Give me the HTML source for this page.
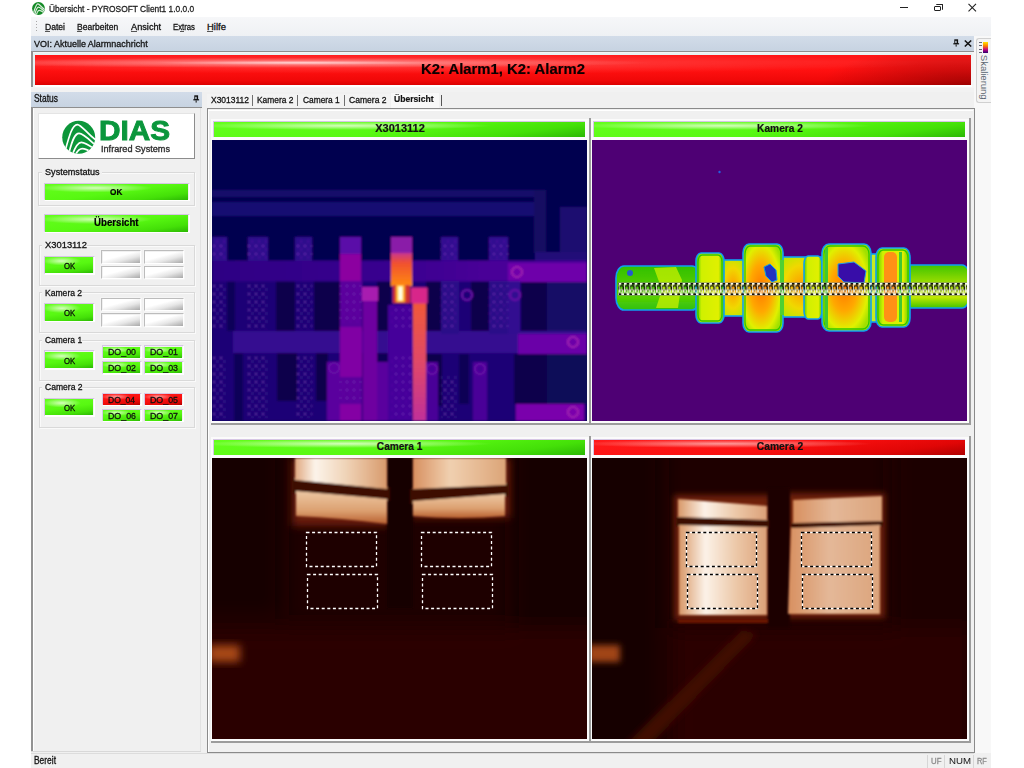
<!DOCTYPE html>
<html><head><meta charset="utf-8">
<style>
*{margin:0;padding:0;box-sizing:border-box}
html,body{width:1024px;height:768px;overflow:hidden;background:#fff;font-family:"Liberation Sans",sans-serif;font-size:11px;color:#000}
.a{position:absolute}
.t{position:absolute;white-space:nowrap;line-height:1}
.hdr{background:linear-gradient(#d2dce9,#c7d3e1)}
.greenbtn{background:
 radial-gradient(ellipse 40% 28% at 35% 25%,rgba(225,255,205,.9),rgba(225,255,205,0) 100%),
 linear-gradient(172deg,#64ff1c 0%,#58f812 50%,#44e008 80%,#2cb804 100%);}
.redbtn{background:
 radial-gradient(ellipse 40% 28% at 35% 25%,rgba(255,175,175,.85),rgba(255,175,175,0) 100%),
 linear-gradient(172deg,#ff1a1a 0%,#fa1010 50%,#e00606 80%,#b00000 100%);}
.gbtn{background:linear-gradient(165deg,#fff 0%,#fff 40%,#e6e6e6 65%,#a8a8a8 100%)}
.grp{border:1px solid #d9d9d9;box-shadow:inset 1px 1px 0 #fafafa, 1px 1px 0 #fafafa}
</style></head><body>

<svg class="a" style="left:32px;top:2px" width="13" height="13" viewBox="0 0 768 768">
<defs><clipPath id="ic"><circle cx="384" cy="384" r="380"/></clipPath></defs>
<circle cx="384" cy="384" r="380" fill="#138a26"/>
<g clip-path="url(#ic)" stroke="#d8ecd8" stroke-width="70" fill="none">
<path d="M90 660 C180 330 250 110 350 110 C440 110 520 290 760 450"/>
<path d="M170 720 C240 440 300 300 385 300 C470 300 560 410 740 560"/>
<path d="M250 770 C310 580 360 490 430 490 C510 490 590 550 700 630"/>
</g></svg>
<div class="a" style="left:900px;top:7px;width:8px;height:1.2px;background:#222"></div>
<div class="a" style="left:934px;top:5.5px;width:6.5px;height:5.5px;border:1.1px solid #222;border-radius:1px;background:#fff"></div>
<div class="a" style="left:936px;top:4px;width:6.5px;height:5.5px;border-top:1.1px solid #222;border-right:1.1px solid #222;border-radius:1px"></div>
<svg class="a" style="left:968px;top:3px" width="9" height="9"><path d="M0.5 0.8L8 8.3M8 0.8L0.5 8.3" stroke="#222" stroke-width="1.1"/></svg>
<div class="a" style="left:31px;top:17px;width:960px;height:751px;background:#f0f0f0"></div>
<div class="a" style="left:31px;top:16.5px;width:960px;height:19px;background:linear-gradient(#f6f7f9,#eff1f4)"></div>
<div class="a" style="left:35.5px;top:21px;width:1.5px;height:11px;background:repeating-linear-gradient(#a8a8a8 0 1.3px,transparent 1.3px 3px)"></div>
<div class="a" style="left:44.7px;top:30.6px;width:5.799999999999997px;height:1px;background:#555"></div>
<div class="a" style="left:76.9px;top:30.6px;width:5.599999999999994px;height:1px;background:#555"></div>
<div class="a" style="left:130.5px;top:30.6px;width:6.5px;height:1px;background:#555"></div>
<div class="a" style="left:180px;top:30.6px;width:4px;height:1px;background:#555"></div>
<div class="a" style="left:207px;top:30.6px;width:6px;height:1px;background:#555"></div>
<div class="a hdr" style="left:31px;top:35.5px;width:943px;height:15.5px"></div>
<svg class="a" style="left:953px;top:39px" width="7" height="8"><rect x="1.3" y="0.3" width="3.8" height="4.6" fill="#111"/><rect x="2.3" y="1.8" width="1.3" height="2.2" fill="#d4dfeb"/><rect x="0.3" y="4.2" width="5.8" height="1.2" fill="#111"/><rect x="2.6" y="5.4" width="1.1" height="2.2" fill="#222"/></svg>
<svg class="a" style="left:964px;top:40px" width="8" height="7"><path d="M0.8 0.5L7.2 6.5M7.2 0.5L0.8 6.5" stroke="#111" stroke-width="1.5"/></svg>
<div class="a" style="left:31px;top:50.8px;width:943px;height:37px;background:#f5f5f5"></div>
<div class="a" style="left:31px;top:50.8px;width:943px;height:1.7px;background:#8e8e8e"></div>
<div class="a" style="left:31px;top:50.8px;width:1.8px;height:36.5px;background:#939393"></div>
<div class="a" style="left:32.8px;top:52.5px;width:939px;height:2px;background:#e6f2f2"></div>
<div class="a" style="left:32.8px;top:52.5px;width:1.8px;height:32.5px;background:#e6f2f2"></div>
<div class="a" style="left:34.6px;top:54.6px;width:936.4px;height:30px;background:
 radial-gradient(ellipse 38% 17% at 28% 26%,rgba(255,215,215,1),rgba(255,170,170,.5) 40%,rgba(255,150,150,0)),
 radial-gradient(ellipse 55% 35% at 40% 28%,rgba(255,120,120,.45),rgba(255,120,120,0)),
 linear-gradient(#ff1414 0%,#ff1a1a 22%,#ff1010 50%,#f00808 85%,#dc0000 100%)"></div>
<div class="a" style="left:34.6px;top:54.6px;width:936.4px;height:30px;background:radial-gradient(ellipse 16% 130% at 100% 100%,rgba(80,0,0,.45),rgba(80,0,0,0))"></div>
<div class="a" style="left:34.6px;top:84.6px;width:937px;height:2.7px;background:#fff"></div>
<div class="a" style="left:974px;top:35.5px;width:17px;height:717px;background:#f8f8f8"></div>
<div class="a" style="left:976.3px;top:37.7px;width:14.7px;height:65.7px;background:#f4f4f4;border:1px solid #d0d0d0;border-right:none;border-radius:3px 0 0 3px"></div>
<div class="a" style="left:983.3px;top:42px;width:4.5px;height:11px;background:linear-gradient(#ffe400,#ff8000 35%,#c00080 70%,#28006e)"></div>
<div class="a" style="left:979.3px;top:42px;width:3px;height:11px;background:repeating-linear-gradient(#667 0 1px,transparent 1px 3.3px)"></div>
<div class="t" style="left:962px;top:71.8px;width:44px;text-align:center;font-size:9.7px;letter-spacing:-0.1px;color:#5a6470;transform:rotate(90deg)">Skalierung</div>
<div class="a" style="left:31px;top:88px;width:943px;height:4px;background:#f2f2f2"></div>
<div class="a hdr" style="left:31px;top:91.7px;width:170.5px;height:15.5px"></div>
<svg class="a" style="left:192.6px;top:94.8px" width="7" height="8"><rect x="1.3" y="0.3" width="3.8" height="4.6" fill="#111"/><rect x="2.3" y="1.8" width="1.3" height="2.2" fill="#d4dfeb"/><rect x="0.3" y="4.2" width="5.8" height="1.2" fill="#111"/><rect x="2.6" y="5.4" width="1.1" height="2.2" fill="#222"/></svg>
<div class="a" style="left:31px;top:107.1px;width:170.5px;height:1.2px;background:#8e8e8e"></div>
<div class="a" style="left:31px;top:108px;width:170px;height:644px;background:#f0f0f0"></div>
<div class="a" style="left:31px;top:107px;width:1.5px;height:645px;background:#939393"></div>
<div class="a" style="left:32.5px;top:108.3px;width:1px;height:643px;background:#fff"></div>
<div class="a" style="left:199.8px;top:108px;width:1.2px;height:644px;background:#e2e2e2"></div>
<div class="a" style="left:31px;top:751.2px;width:170px;height:1.2px;background:#d8d8d8"></div>
<div class="a" style="left:37.8px;top:113.4px;width:157.4px;height:46px;background:#fff;border-top:1px solid #e4e4e4;border-left:1px solid #e4e4e4;border-right:1.6px solid #8c8c8c;border-bottom:1.6px solid #8c8c8c"></div>
<svg class="a" style="left:60px;top:118.5px" width="38" height="38" viewBox="0 0 768 768">
<defs><clipPath id="lc"><circle cx="378" cy="370" r="333"/></clipPath></defs>
<circle cx="378" cy="370" r="333" fill="#0c963a"/>
<g clip-path="url(#lc)" stroke="#fff" stroke-width="34" fill="none">
<path d="M110 620 C190 330 250 112 350 112 C440 112 530 290 760 450"/>
<path d="M185 670 C250 420 300 292 385 292 C470 292 570 400 740 550"/>
<path d="M250 720 C310 560 360 472 430 472 C510 472 590 530 700 610"/>
<path d="M290 760 C340 660 390 600 450 600 C510 600 570 630 650 680"/>
</g></svg>
<div class="a grp" style="left:38.4px;top:171.7px;width:156.5px;height:34.3px"></div>
<div class="a" style="left:42px;top:166px;width:60px;height:9px;background:#f0f0f0"></div>
<div class="a" style="left:43.6px;top:182.55px;width:146.2px;height:18.8px;border-top:1px solid #d6c6e4;border-left:1px solid #d6c6e4;border-right:1.5px solid #fff;border-bottom:2px solid #fff"></div><div class="a greenbtn" style="left:44.9px;top:183.75px;width:143.6px;height:16px"></div>
<div class="a" style="left:43.6px;top:213.8px;width:146.2px;height:19.400000000000002px;border-top:1px solid #d6c6e4;border-left:1px solid #d6c6e4;border-right:1.5px solid #fff;border-bottom:2px solid #fff"></div><div class="a greenbtn" style="left:44.9px;top:215px;width:143.6px;height:16.6px"></div>
<div class="a grp" style="left:38.5px;top:244.8px;width:156.5px;height:41px"></div>
<div class="a" style="left:42px;top:239.8px;width:45px;height:9px;background:#f0f0f0"></div>
<div class="a" style="left:43.5px;top:255.70000000000005px;width:51.1px;height:19.3px;border-top:1px solid #d6c6e4;border-left:1px solid #d6c6e4;border-right:1.5px solid #fff;border-bottom:2px solid #fff"></div><div class="a greenbtn" style="left:44.8px;top:256.90000000000003px;width:48.5px;height:16.5px"></div>
<div class="a" style="left:101.4px;top:250.20000000000002px;width:40px;height:13.4px;border-top:1.3px solid #bcbcbc;border-left:1.3px solid #bcbcbc;border-right:1px solid #fff;border-bottom:1px solid #fff;box-shadow:0 0 0 0.6px #f8f8f8"></div>
<div class="a gbtn" style="left:102.7px;top:251.50000000000003px;width:37.7px;height:11.1px"></div>
<div class="a" style="left:143.60000000000002px;top:250.20000000000002px;width:40px;height:13.4px;border-top:1.3px solid #bcbcbc;border-left:1.3px solid #bcbcbc;border-right:1px solid #fff;border-bottom:1px solid #fff;box-shadow:0 0 0 0.6px #f8f8f8"></div>
<div class="a gbtn" style="left:144.90000000000003px;top:251.50000000000003px;width:37.7px;height:11.1px"></div>
<div class="a" style="left:101.4px;top:266.1px;width:40px;height:13.4px;border-top:1.3px solid #bcbcbc;border-left:1.3px solid #bcbcbc;border-right:1px solid #fff;border-bottom:1px solid #fff;box-shadow:0 0 0 0.6px #f8f8f8"></div>
<div class="a gbtn" style="left:102.7px;top:267.40000000000003px;width:37.7px;height:11.1px"></div>
<div class="a" style="left:143.60000000000002px;top:266.1px;width:40px;height:13.4px;border-top:1.3px solid #bcbcbc;border-left:1.3px solid #bcbcbc;border-right:1px solid #fff;border-bottom:1px solid #fff;box-shadow:0 0 0 0.6px #f8f8f8"></div>
<div class="a gbtn" style="left:144.90000000000003px;top:267.40000000000003px;width:37.7px;height:11.1px"></div>
<div class="a grp" style="left:38.5px;top:292.1px;width:156.5px;height:41px"></div>
<div class="a" style="left:42px;top:287.1px;width:40px;height:9px;background:#f0f0f0"></div>
<div class="a" style="left:43.5px;top:303.00000000000006px;width:51.1px;height:19.3px;border-top:1px solid #d6c6e4;border-left:1px solid #d6c6e4;border-right:1.5px solid #fff;border-bottom:2px solid #fff"></div><div class="a greenbtn" style="left:44.8px;top:304.20000000000005px;width:48.5px;height:16.5px"></div>
<div class="a" style="left:101.4px;top:297.5px;width:40px;height:13.4px;border-top:1.3px solid #bcbcbc;border-left:1.3px solid #bcbcbc;border-right:1px solid #fff;border-bottom:1px solid #fff;box-shadow:0 0 0 0.6px #f8f8f8"></div>
<div class="a gbtn" style="left:102.7px;top:298.8px;width:37.7px;height:11.1px"></div>
<div class="a" style="left:143.60000000000002px;top:297.5px;width:40px;height:13.4px;border-top:1.3px solid #bcbcbc;border-left:1.3px solid #bcbcbc;border-right:1px solid #fff;border-bottom:1px solid #fff;box-shadow:0 0 0 0.6px #f8f8f8"></div>
<div class="a gbtn" style="left:144.90000000000003px;top:298.8px;width:37.7px;height:11.1px"></div>
<div class="a" style="left:101.4px;top:313.4px;width:40px;height:13.4px;border-top:1.3px solid #bcbcbc;border-left:1.3px solid #bcbcbc;border-right:1px solid #fff;border-bottom:1px solid #fff;box-shadow:0 0 0 0.6px #f8f8f8"></div>
<div class="a gbtn" style="left:102.7px;top:314.7px;width:37.7px;height:11.1px"></div>
<div class="a" style="left:143.60000000000002px;top:313.4px;width:40px;height:13.4px;border-top:1.3px solid #bcbcbc;border-left:1.3px solid #bcbcbc;border-right:1px solid #fff;border-bottom:1px solid #fff;box-shadow:0 0 0 0.6px #f8f8f8"></div>
<div class="a gbtn" style="left:144.90000000000003px;top:314.7px;width:37.7px;height:11.1px"></div>
<div class="a grp" style="left:38.5px;top:339.5px;width:156.5px;height:41px"></div>
<div class="a" style="left:42px;top:334.5px;width:40px;height:9px;background:#f0f0f0"></div>
<div class="a" style="left:43.5px;top:350.40000000000003px;width:51.1px;height:19.3px;border-top:1px solid #d6c6e4;border-left:1px solid #d6c6e4;border-right:1.5px solid #fff;border-bottom:2px solid #fff"></div><div class="a greenbtn" style="left:44.8px;top:351.6px;width:48.5px;height:16.5px"></div>
<div class="a" style="left:101.50000000000001px;top:345.40000000000003px;width:40.0px;height:13.8px;border-top:1px solid #d6c6e4;border-left:1px solid #d6c6e4;border-right:1.5px solid #fff;border-bottom:2px solid #fff"></div><div class="a greenbtn" style="left:102.80000000000001px;top:346.6px;width:37.4px;height:11px"></div>
<div class="a" style="left:143.70000000000002px;top:345.40000000000003px;width:40.0px;height:13.8px;border-top:1px solid #d6c6e4;border-left:1px solid #d6c6e4;border-right:1.5px solid #fff;border-bottom:2px solid #fff"></div><div class="a greenbtn" style="left:145.00000000000003px;top:346.6px;width:37.4px;height:11px"></div>
<div class="a" style="left:101.50000000000001px;top:361.20000000000005px;width:40.0px;height:13.8px;border-top:1px solid #d6c6e4;border-left:1px solid #d6c6e4;border-right:1.5px solid #fff;border-bottom:2px solid #fff"></div><div class="a greenbtn" style="left:102.80000000000001px;top:362.40000000000003px;width:37.4px;height:11px"></div>
<div class="a" style="left:143.70000000000002px;top:361.20000000000005px;width:40.0px;height:13.8px;border-top:1px solid #d6c6e4;border-left:1px solid #d6c6e4;border-right:1.5px solid #fff;border-bottom:2px solid #fff"></div><div class="a greenbtn" style="left:145.00000000000003px;top:362.40000000000003px;width:37.4px;height:11px"></div>
<div class="a grp" style="left:38.5px;top:386.8px;width:156.5px;height:41px"></div>
<div class="a" style="left:42px;top:381.8px;width:40px;height:9px;background:#f0f0f0"></div>
<div class="a" style="left:43.5px;top:397.70000000000005px;width:51.1px;height:19.3px;border-top:1px solid #d6c6e4;border-left:1px solid #d6c6e4;border-right:1.5px solid #fff;border-bottom:2px solid #fff"></div><div class="a greenbtn" style="left:44.8px;top:398.90000000000003px;width:48.5px;height:16.5px"></div>
<div class="a" style="left:101.50000000000001px;top:392.70000000000005px;width:40.0px;height:13.8px;border-top:1px solid #d6c6e4;border-left:1px solid #d6c6e4;border-right:1.5px solid #fff;border-bottom:2px solid #fff"></div><div class="a redbtn" style="left:102.80000000000001px;top:393.90000000000003px;width:37.4px;height:11px"></div>
<div class="a" style="left:143.70000000000002px;top:392.70000000000005px;width:40.0px;height:13.8px;border-top:1px solid #d6c6e4;border-left:1px solid #d6c6e4;border-right:1.5px solid #fff;border-bottom:2px solid #fff"></div><div class="a redbtn" style="left:145.00000000000003px;top:393.90000000000003px;width:37.4px;height:11px"></div>
<div class="a" style="left:101.50000000000001px;top:408.50000000000006px;width:40.0px;height:13.8px;border-top:1px solid #d6c6e4;border-left:1px solid #d6c6e4;border-right:1.5px solid #fff;border-bottom:2px solid #fff"></div><div class="a greenbtn" style="left:102.80000000000001px;top:409.70000000000005px;width:37.4px;height:11px"></div>
<div class="a" style="left:143.70000000000002px;top:408.50000000000006px;width:40.0px;height:13.8px;border-top:1px solid #d6c6e4;border-left:1px solid #d6c6e4;border-right:1.5px solid #fff;border-bottom:2px solid #fff"></div><div class="a greenbtn" style="left:145.00000000000003px;top:409.70000000000005px;width:37.4px;height:11px"></div>
<div class="a" style="left:207px;top:93.7px;width:183px;height:14.5px;background:#f3f3f3"></div>
<div class="a" style="left:251.6px;top:94.6px;width:1.2px;height:11.7px;background:#707070"></div>
<div class="a" style="left:297.3px;top:94.6px;width:1.2px;height:11.7px;background:#707070"></div>
<div class="a" style="left:343.6px;top:94.6px;width:1.2px;height:11.7px;background:#707070"></div>
<div class="a" style="left:390.8px;top:93.1px;width:48px;height:15px;background:#f8f8f8"></div>
<div class="a" style="left:441px;top:94.6px;width:1.3px;height:11.7px;background:#555"></div>
<div class="a" style="left:207px;top:108.2px;width:767.5px;height:644.5px;background:#f0f0f0;border:1.3px solid #8a8a8a;border-right:1.5px solid #8a8a8a"></div>
<div class="a" style="left:208.3px;top:109.5px;width:765px;height:1px;background:#fff"></div>
<div class="a" style="left:208.3px;top:109.5px;width:1px;height:642px;background:#fff"></div>
<div class="a" style="left:211px;top:119px;width:379px;height:305px;background:#fbfbfb"></div>
<div class="a" style="left:589px;top:118px;width:2px;height:307px;background:#9c9c9c"></div>
<div class="a" style="left:211px;top:423px;width:380px;height:2px;background:#9c9c9c"></div>
<div class="a" style="left:213px;top:121px;width:372px;height:16px;border-top:1px solid #d6c6e4;border-left:1px solid #d6c6e4"></div>
<div class="a greenbtn" style="left:214px;top:122px;width:371px;height:14.5px"></div>
<div class="a" style="left:212px;top:140px;width:375px;height:281px;overflow:hidden"><svg width="375" height="281" viewBox="0 0 375 281">
<defs><filter id="b0" x="-2%" y="-2%" width="104%" height="104%"><feGaussianBlur stdDeviation="0.8"/></filter>
<linearGradient id="hot" x1="0" y1="0" x2="0" y2="1"><stop offset="0" stop-color="#f05a38"/><stop offset="0.5" stop-color="#e04868"/><stop offset="1" stop-color="#c0309a"/></linearGradient>
<linearGradient id="hot2" x1="0" y1="0" x2="0" y2="1"><stop offset="0" stop-color="#c83890"/><stop offset="0.3" stop-color="#f05030"/><stop offset="1" stop-color="#ff8a10"/></linearGradient>
<linearGradient id="bus" x1="0" y1="0" x2="1" y2="0"><stop offset="0" stop-color="#2e0484"/><stop offset="0.5" stop-color="#3a0490"/><stop offset="0.75" stop-color="#4a0098"/><stop offset="1" stop-color="#4a0098"/></linearGradient>
<pattern id="cdots" width="7" height="8" patternUnits="userSpaceOnUse"><rect x="1" y="1" width="2" height="2" fill="#8a40c8"/><rect x="4.5" y="4.5" width="1.6" height="2" fill="#6a28b0"/></pattern>
</defs>
<rect width="375" height="281" fill="#060650"/>
<g filter="url(#b0)">
<rect width="375" height="281" fill="#060650"/>
<rect x="0" y="50" width="334" height="7" fill="#160a6a"/>
<rect x="0" y="62" width="334" height="14" fill="#180a72"/>
<rect x="322" y="50" width="12" height="63" fill="#120862"/>
<rect x="348" y="67" width="27" height="46" fill="#1a0a70"/>
<!-- lower base -->
<rect x="0" y="141" width="375" height="140" fill="#1c0676"/>
<!-- navy gaps lower -->
<rect x="15" y="141" width="8" height="50" fill="#0c0658"/>
<rect x="22" y="213" width="9" height="68" fill="#0c0658"/>
<rect x="64" y="141" width="19" height="50" fill="#07064c"/>
<rect x="65" y="213" width="20" height="48" fill="#07064c"/>
<rect x="102" y="141" width="26" height="50" fill="#07064c"/>
<rect x="104" y="213" width="12" height="48" fill="#07064c"/>
<rect x="165" y="141" width="14" height="52" fill="#07064c"/>
<rect x="163" y="213" width="13" height="48" fill="#0a0654"/>
<rect x="214" y="141" width="15" height="53" fill="#07064c"/>
<rect x="214" y="214" width="16" height="52" fill="#07064c"/>
<rect x="259" y="141" width="18" height="53" fill="#07064c"/>
<rect x="247" y="214" width="10" height="50" fill="#0a0654"/>
<rect x="309" y="141" width="26" height="53" fill="#07064c"/>
<rect x="302" y="214" width="33" height="50" fill="#07064c"/>
<rect x="335" y="141" width="40" height="53" fill="#140a66"/>
<rect x="335" y="214" width="40" height="50" fill="#0e0858"/>
<!-- column tops -->
<rect x="0" y="97" width="15" height="24" fill="#2d0a8c"/>
<rect x="36" y="97" width="20" height="24" fill="#2d0a8c"/>
<rect x="83" y="97" width="17" height="24" fill="#2d0a8c"/>
<rect x="128" y="97" width="21" height="24" fill="#5a10a8"/>
<rect x="229" y="97" width="17" height="24" fill="#300a90"/>
<rect x="277" y="97" width="19" height="24" fill="#300a90"/>
<rect x="323" y="112" width="52" height="10" fill="#220a78"/>
<!-- upper busbar -->
<rect x="0" y="120.5" width="375" height="21" fill="url(#bus)"/>
<rect x="296" y="123" width="79" height="19" fill="#6e00aa"/>
<rect x="128" y="114" width="21" height="29" fill="#8c00a0"/>
<!-- lower busbar -->
<rect x="128" y="141" width="22" height="140" fill="#5a009c"/>
<rect x="21" y="191" width="354" height="22" fill="#340890"/>
<rect x="306" y="194" width="69" height="20" fill="#6a00a8"/>
<rect x="128" y="187" width="22" height="50" fill="#8000a4"/>
<rect x="128" y="264" width="21" height="17" fill="#8400a4"/>
<rect x="304" y="264" width="68" height="17" fill="#7a00ac"/>
<rect x="176" y="165" width="24" height="116" fill="#44009a"/>
<rect x="115" y="222" width="13" height="59" fill="#5a009e"/>
<rect x="163" y="222" width="13" height="59" fill="#5a009e"/>
<rect x="213" y="222" width="13" height="59" fill="#4a0098"/>
<rect x="261" y="222" width="14" height="59" fill="#4a0098"/>
<rect x="296" y="141" width="12" height="53" fill="#300a90"/>
<rect x="229" y="141" width="18" height="53" fill="#2a0888"/>
<rect x="277" y="141" width="19" height="53" fill="#2a0888"/>
<!-- grey purple strip -->
<rect x="151" y="148" width="14" height="133" fill="#6e00a0"/>
<rect x="150" y="147" width="16" height="14" fill="#a81eb0"/>
<!-- hot column -->
<rect x="179" y="97" width="21" height="17" fill="#8a1aa8"/>
<rect x="179" y="113" width="21" height="33" fill="url(#hot2)"/>
<rect x="181" y="145" width="17" height="18" fill="#d03030"/>
<rect x="184" y="145" width="9" height="17" fill="#ffa020"/>
<rect x="185.5" y="146" width="5.5" height="15" fill="#fff070"/>
<rect x="187" y="147" width="3" height="13" fill="#fffff0"/>
<rect x="201" y="163" width="13" height="118" fill="url(#hot)"/>
<rect x="199" y="147.5" width="16.5" height="16" fill="#d8288a"/>
<g opacity="0.55">
<rect x="0" y="99" width="15" height="20" fill="url(#cdots)"/>
<rect x="36" y="99" width="20" height="20" fill="url(#cdots)"/>
<rect x="83" y="99" width="17" height="20" fill="url(#cdots)"/>
<rect x="229" y="99" width="17" height="20" fill="url(#cdots)"/>
<rect x="277" y="99" width="19" height="20" fill="url(#cdots)"/>
<rect x="0" y="145" width="15" height="44" fill="url(#cdots)"/>
<rect x="36" y="145" width="20" height="44" fill="url(#cdots)"/>
<rect x="83" y="145" width="17" height="44" fill="url(#cdots)"/>
<rect x="229" y="145" width="17" height="44" fill="url(#cdots)"/>
<rect x="277" y="145" width="19" height="44" fill="url(#cdots)"/>
<rect x="179" y="165" width="20" height="24" fill="url(#cdots)"/>
<rect x="0" y="216" width="15" height="62" fill="url(#cdots)"/>
<rect x="36" y="216" width="20" height="62" fill="url(#cdots)"/>
<rect x="83" y="216" width="17" height="62" fill="url(#cdots)"/>
<rect x="179" y="216" width="20" height="62" fill="url(#cdots)"/>
<rect x="229" y="236" width="17" height="42" fill="url(#cdots)"/>
<rect x="128" y="145" width="21" height="40" fill="url(#cdots)"/>
<rect x="128" y="240" width="21" height="22" fill="url(#cdots)"/>
</g>
<!-- bolts -->
<g fill="none" stroke="#6a10a8" stroke-width="2.2">
<circle cx="255" cy="155" r="5"/><circle cx="303" cy="155" r="5"/><circle cx="220" cy="229" r="5"/><circle cx="268" cy="229" r="5"/><circle cx="122" cy="228" r="5"/><circle cx="361" cy="202" r="5" stroke="#a020b0"/><circle cx="361" cy="272" r="5" stroke="#a020b0"/><circle cx="305" cy="132" r="5" stroke="#a020b0"/>
</g>
</g>
</svg></div>
<div class="a" style="left:591px;top:119px;width:379px;height:305px;background:#fbfbfb"></div>
<div class="a" style="left:969px;top:118px;width:2px;height:307px;background:#9c9c9c"></div>
<div class="a" style="left:591px;top:423px;width:380px;height:2px;background:#9c9c9c"></div>
<div class="a" style="left:593px;top:121px;width:372px;height:16px;border-top:1px solid #d6c6e4;border-left:1px solid #d6c6e4"></div>
<div class="a greenbtn" style="left:594px;top:122px;width:371px;height:14.5px"></div>
<div class="a" style="left:592px;top:140px;width:375px;height:281px;overflow:hidden"><svg width="375" height="281" viewBox="0 0 375 281">
<defs>
<filter id="b1" x="-5%" y="-5%" width="110%" height="110%"><feGaussianBlur stdDeviation="0.6"/></filter>
<pattern id="dots" x="0" y="142.5" width="5.33" height="13" patternUnits="userSpaceOnUse">
<rect x="0" y="0" width="2.66" height="2.4" fill="#f8f8f0"/><rect x="2.66" y="0" width="2.67" height="2.4" fill="#111"/>
<rect x="0" y="10.6" width="2.66" height="2.4" fill="#111"/><rect x="2.66" y="10.6" width="2.67" height="2.4" fill="#f8f8f0"/>
<circle cx="2.66" cy="5.4" r="2.2" fill="none" stroke="#101010" stroke-width="1.3"/><circle cx="2.66" cy="8.6" r="1.6" fill="none" stroke="#f0f0e0" stroke-width="0.9"/>
<rect x="0" y="2.4" width="0.8" height="8" fill="#f0f0e0"/>
</pattern>
<linearGradient id="gy" x1="0" y1="0" x2="1" y2="0"><stop offset="0" stop-color="#50c800"/><stop offset="0.2" stop-color="#d0f000"/><stop offset="0.8" stop-color="#e0f000"/><stop offset="1" stop-color="#48c800"/></linearGradient>
<linearGradient id="gg" x1="0" y1="0" x2="0" y2="1"><stop offset="0" stop-color="#30c000"/><stop offset="0.3" stop-color="#48c800"/><stop offset="0.7" stop-color="#58d000"/><stop offset="1" stop-color="#30c010"/></linearGradient>
<radialGradient id="go" cx="0.45" cy="0.5" r="0.6"><stop offset="0" stop-color="#ff7800"/><stop offset="0.45" stop-color="#ffa800"/><stop offset="0.8" stop-color="#e0f000"/><stop offset="1" stop-color="#a0e000"/></radialGradient>
<radialGradient id="go2" cx="0.5" cy="0.5" r="0.6"><stop offset="0" stop-color="#ff9800"/><stop offset="0.6" stop-color="#f0d800"/><stop offset="1" stop-color="#b8e800"/></radialGradient>
<linearGradient id="gg2" x1="0" y1="0" x2="0" y2="1"><stop offset="0" stop-color="#40c400"/><stop offset="0.4" stop-color="#98dc00"/><stop offset="0.75" stop-color="#c0e800"/><stop offset="1" stop-color="#40c400"/></linearGradient>
</defs>
<rect width="375" height="281" fill="#4e0074"/>
<g filter="url(#b1)" stroke="#10a0f0" stroke-width="1.6">
<rect x="24" y="126" width="84" height="44" rx="8" ry="12" fill="url(#gg)"/>
<rect x="310" y="125" width="68" height="43" rx="8" ry="14" fill="url(#gg2)"/>
<rect x="128" y="120" width="26" height="56" fill="url(#go2)"/>
<rect x="186" y="117" width="46" height="60" fill="url(#go2)"/>
<rect x="274" y="114" width="14" height="68" fill="#c8ec20"/>
<rect x="104" y="113" width="28" height="70" rx="5" ry="8" fill="url(#gy)"/>
<rect x="151" y="104" width="40" height="88" rx="6" ry="9" fill="url(#go)"/>
<rect x="212" y="116" width="18" height="63" rx="4" ry="8" fill="url(#gy)"/>
<rect x="230" y="104" width="49" height="87" rx="7" ry="9" fill="url(#go)"/>
<rect x="284" y="108" width="34" height="79" rx="6" ry="9" fill="url(#gy)"/>
</g>
<g filter="url(#b1)" fill="none" stroke="#30c800" stroke-width="1.3">
<rect x="106" y="115" width="24" height="66" rx="4" ry="7"/>
<rect x="153" y="106" width="36" height="84" rx="5" ry="8"/>
<rect x="232" y="106" width="45" height="83" rx="6" ry="8"/>
<rect x="286" y="110" width="30" height="75" rx="5" ry="8"/>
</g>
<g filter="url(#b1)">
<path d="M62 128 L84 127 L90 140 L86 168 L64 168 L70 150Z" fill="#c8f000" opacity="0.75"/>
<rect x="292" y="112" width="13" height="70" rx="5" fill="#ff9018"/>
<rect x="307" y="112" width="3" height="70" fill="#40c830"/>
<rect x="233" y="108" width="3" height="80" fill="#40c830"/>
<rect x="188" y="120" width="4" height="55" fill="#50d030"/>
<path d="M246 124 L262 122 L274 131 L272 143 L252 142 L246 136Z" fill="#3810a8" stroke="#20a0e0" stroke-width="1"/>
<path d="M172 127 L178 124 L184 130 L185 140 L180 142 L174 136Z" fill="#2030c0" stroke="#10a0e0" stroke-width="1"/>
<circle cx="38" cy="133" r="3" fill="#2858d0"/>

<circle cx="127.5" cy="32" r="1.2" fill="#2060e0"/>
</g>
<rect x="26" y="142.5" width="349" height="13" fill="url(#dots)"/>
</svg></div>
<div class="a" style="left:211px;top:437px;width:379px;height:305px;background:#fbfbfb"></div>
<div class="a" style="left:589px;top:436px;width:2px;height:307px;background:#9c9c9c"></div>
<div class="a" style="left:211px;top:741px;width:380px;height:2px;background:#9c9c9c"></div>
<div class="a" style="left:213px;top:439px;width:372px;height:16px;border-top:1px solid #d6c6e4;border-left:1px solid #d6c6e4"></div>
<div class="a greenbtn" style="left:214px;top:440px;width:371px;height:14.5px"></div>
<div class="a" style="left:212px;top:458px;width:375px;height:281px;overflow:hidden"><svg width="375" height="281" viewBox="0 0 375 281">
<defs>
<filter id="b2" x="-30%" y="-30%" width="160%" height="160%"><feGaussianBlur stdDeviation="4"/></filter>
<filter id="b2bg" x="-10%" y="-10%" width="120%" height="120%"><feGaussianBlur stdDeviation="10"/></filter>
<filter id="b2s" x="-10%" y="-10%" width="120%" height="120%"><feGaussianBlur stdDeviation="0.9"/></filter>
<linearGradient id="w1" x1="0" y1="0" x2="1" y2="0"><stop offset="0" stop-color="#e0a880"/><stop offset="0.22" stop-color="#fcf4ea"/><stop offset="0.55" stop-color="#f0d4b8"/><stop offset="1" stop-color="#d89a6c"/></linearGradient>
<linearGradient id="w2" x1="0" y1="0" x2="1" y2="0"><stop offset="0" stop-color="#d89060"/><stop offset="0.4" stop-color="#f0d0b0"/><stop offset="1" stop-color="#dca478"/></linearGradient>
<linearGradient id="w3" x1="0" y1="0" x2="0" y2="1"><stop offset="0" stop-color="#ecc8a4"/><stop offset="0.6" stop-color="#dca070"/><stop offset="1" stop-color="#b86030"/></linearGradient>
</defs>
<rect width="375" height="281" fill="#1e0000"/>
<g filter="url(#b2bg)">
<rect x="-20" y="-20" width="90" height="180" fill="#180000"/>
<rect x="300" y="-20" width="95" height="230" fill="#180000"/>
<rect x="-20" y="170" width="415" height="130" fill="#2a0000"/>
<rect x="190" y="200" width="150" height="100" fill="#2a0000"/>
</g>
<g filter="url(#b2)" opacity="0.85">
<rect x="80" y="0" width="98" height="68" fill="#7a2408"/>
<rect x="198" y="0" width="100" height="60" fill="#7a2408"/>
</g>
<rect x="175" y="0" width="26" height="150" fill="#180000" filter="url(#b2s)"/>
<rect x="-4" y="187" width="32" height="17" fill="#a84818" filter="url(#b2)"/>
<g filter="url(#b2s)">
<path d="M80 20 L178 29 L178 43 L80 35Z" fill="#3c0c02"/>
<path d="M198 31 L297 25 L297 38 L198 46Z" fill="#3c0c02"/>
<path d="M83 0 H175 V31 L83 22Z" fill="url(#w1)"/>
<path d="M84 33 L175 41 V66 Q130 60 84 58Z" fill="url(#w3)"/>
<path d="M201 0 H294 V27 L201 31Z" fill="url(#w2)"/>
<path d="M201 43 L293 36 V58 Q248 62 201 58Z" fill="url(#w3)"/>
</g>
<g fill="none" stroke="#fff" stroke-width="1.3" stroke-dasharray="3 2.6">
<rect x="94.5" y="74.5" width="70" height="34"/>
<rect x="95.5" y="116.5" width="70" height="34"/>
<rect x="209.5" y="74.5" width="70" height="34"/>
<rect x="210.5" y="116.5" width="70" height="34"/>
</g>
</svg></div>
<div class="a" style="left:591px;top:437px;width:379px;height:305px;background:#fbfbfb"></div>
<div class="a" style="left:969px;top:436px;width:2px;height:307px;background:#9c9c9c"></div>
<div class="a" style="left:591px;top:741px;width:380px;height:2px;background:#9c9c9c"></div>
<div class="a" style="left:593px;top:439px;width:372px;height:16px;border-top:1px solid #d6c6e4;border-left:1px solid #d6c6e4"></div>
<div class="a redbtn" style="left:594px;top:440px;width:371px;height:14.5px"></div>
<div class="a" style="left:592px;top:458px;width:375px;height:281px;overflow:hidden"><svg width="375" height="281" viewBox="0 0 375 281">
<defs>
<filter id="b3" x="-30%" y="-30%" width="160%" height="160%"><feGaussianBlur stdDeviation="3"/></filter>
<filter id="b3bg" x="-10%" y="-10%" width="120%" height="120%"><feGaussianBlur stdDeviation="10"/></filter>
<filter id="b3s" x="-10%" y="-10%" width="120%" height="120%"><feGaussianBlur stdDeviation="0.9"/></filter>
<linearGradient id="v1" x1="0" y1="0" x2="1" y2="0"><stop offset="0" stop-color="#d89868"/><stop offset="0.3" stop-color="#fcf2e8"/><stop offset="0.65" stop-color="#ecc8a8"/><stop offset="1" stop-color="#dca078"/></linearGradient>
<linearGradient id="v2" x1="0" y1="0" x2="1" y2="0"><stop offset="0" stop-color="#d89060"/><stop offset="0.45" stop-color="#e4b898"/><stop offset="1" stop-color="#dca47c"/></linearGradient>
</defs>
<rect width="375" height="281" fill="#1e0000"/>
<g filter="url(#b3bg)">
<rect x="-20" y="-20" width="90" height="320" fill="#140000"/>
<rect x="300" y="-20" width="95" height="320" fill="#1a0000"/>
<rect x="80" y="170" width="300" height="130" fill="#2c0000"/>

</g>
<g filter="url(#b3)" opacity="0.75">
<rect x="82" y="37" width="96" height="125" fill="#8a2a08"/>
<rect x="193" y="35" width="100" height="125" fill="#8a2a08"/>
</g>
<rect x="176" y="30" width="22" height="140" fill="#1e0200" filter="url(#b3s)"/>
<path d="M30 290 L150 172 L165 176 L55 290Z" fill="#400a00" filter="url(#b3)"/>
<rect x="-4" y="187" width="32" height="17" fill="#a04414" filter="url(#b3)"/>
<rect x="86" y="161" width="90" height="4" fill="#6a1804" filter="url(#b3s)"/>
<g filter="url(#b3s)">
<path d="M84 59 L177 62 L177 70 L84 68Z" fill="#3a0c02"/>
<path d="M199 65 L291 63 L291 68 L199 71Z" fill="#3a0c02"/>
<path d="M86 41 L175 48 V62 L86 59Z" fill="url(#v1)"/>
<path d="M87 67 L175 69 V157 H87Z" fill="url(#v1)"/>
<path d="M201 42 L290 38 V63 L201 65Z" fill="url(#v2)"/>
<path d="M199 70 L288 67 V156 H196Z" fill="url(#v2)"/>
</g>
<g fill="none" stroke="#fff" stroke-width="1.3">
<rect x="94.5" y="74.5" width="70" height="34"/>
<rect x="95.5" y="116.5" width="70" height="34"/>
<rect x="209.5" y="74.5" width="70" height="34"/>
<rect x="210.5" y="116.5" width="70" height="34"/>
</g>
<g fill="none" stroke="#000" stroke-width="1.3" stroke-dasharray="3 2.6">
<rect x="94.5" y="74.5" width="70" height="34"/>
<rect x="95.5" y="116.5" width="70" height="34"/>
<rect x="209.5" y="74.5" width="70" height="34"/>
<rect x="210.5" y="116.5" width="70" height="34"/>
</g>
</svg></div>
<div class="a" style="left:31px;top:753px;width:960px;height:15px;background:#f0f0f0"></div>
<div class="a" style="left:31px;top:752.6px;width:943px;height:1px;background:#dcdcdc"></div>
<div class="a" style="left:926.6px;top:755px;width:1px;height:13px;background:#d6d6d6"></div>
<div class="a" style="left:944px;top:755px;width:1px;height:13px;background:#d6d6d6"></div>
<div class="a" style="left:973px;top:755px;width:1px;height:13px;background:#d6d6d6"></div>
<div class="t" id="title" style="left:48.80px;top:3.57px;transform:scaleX(0.8735);transform-origin:0 50%;font-size:9.6px;font-weight:400;color:#1c1c1c;-webkit-text-stroke:0.3px #1c1c1c;">Übersicht - PYROSOFT Client1 1.0.0.0</div>
<div class="t" id="m1" style="left:44.70px;top:21.70px;transform:scaleX(0.9091);transform-origin:0 50%;font-size:9.45px;font-weight:400;color:#111;-webkit-text-stroke:0.3px #111;">Datei</div>
<div class="t" id="m2" style="left:76.90px;top:21.70px;transform:scaleX(0.9022);transform-origin:0 50%;font-size:9.45px;font-weight:400;color:#111;-webkit-text-stroke:0.3px #111;">Bearbeiten</div>
<div class="t" id="m3" style="left:130.50px;top:21.70px;transform:scaleX(0.9742);transform-origin:0 50%;font-size:9.45px;font-weight:400;color:#111;-webkit-text-stroke:0.3px #111;">Ansicht</div>
<div class="t" id="m4" style="left:172.70px;top:21.70px;transform:scaleX(0.8222);transform-origin:0 50%;font-size:9.45px;font-weight:400;color:#111;-webkit-text-stroke:0.3px #111;">Extras</div>
<div class="t" id="m5" style="left:207.00px;top:21.70px;transform:scaleX(1.0000);transform-origin:0 50%;font-size:9.45px;font-weight:400;color:#111;-webkit-text-stroke:0.3px #111;">Hilfe</div>
<div class="t" id="voi" style="left:34.10px;top:38.87px;transform:scaleX(0.9087);transform-origin:0 50%;font-size:9.9px;font-weight:400;color:#111;-webkit-text-stroke:0.3px #111;">VOI: Aktuelle Alarmnachricht</div>
<div class="t" id="alarm" style="left:420.60px;top:62.44px;transform:scaleX(0.9969);transform-origin:0 50%;font-size:14.9px;font-weight:700;color:#0a0000;-webkit-text-stroke:0.2px #0a0000;">K2: Alarm1, K2: Alarm2</div>
<div class="t" id="status" style="left:33.90px;top:94.25px;transform:scaleX(0.8345);transform-origin:0 50%;font-size:10.1px;font-weight:400;color:#111;-webkit-text-stroke:0.3px #111;">Status</div>
<div class="t" id="dias" style="left:99.30px;top:116.64px;transform:scaleX(1.0781);transform-origin:0 50%;font-size:27.6px;font-weight:700;color:#0a963c;-webkit-text-stroke:0.9px #0a963c;">DIAS</div>
<div class="t" id="infra" style="left:100.70px;top:143.77px;transform:scaleX(0.9521);transform-origin:0 50%;font-size:9.6px;font-weight:400;color:#2e2e2e;-webkit-text-stroke:0.35px #2e2e2e;">Infrared Systems</div>
<div class="t" id="sys" style="left:44.50px;top:166.60px;transform:scaleX(0.9649);transform-origin:0 50%;font-size:9.45px;font-weight:400;color:#111;-webkit-text-stroke:0.3px #111;">Systemstatus</div>
<div class="t" id="ok0" style="left:110.00px;top:187.81px;transform:scaleX(0.8929);transform-origin:0 50%;font-size:9.2px;font-weight:700;color:#000;-webkit-text-stroke:0.2px #000;">OK</div>
<div class="t" id="ueb" style="left:93.60px;top:218.35px;transform:scaleX(0.9574);transform-origin:0 50%;font-size:10.1px;font-weight:700;color:#000;-webkit-text-stroke:0.2px #000;">Übersicht</div>
<div class="t" id="gl0" style="left:44.60px;top:240.47px;transform:scaleX(0.9767);transform-origin:0 50%;font-size:9.6px;font-weight:400;color:#111;-webkit-text-stroke:0.3px #111;">X3013112</div>
<div class="t" id="gok0" style="left:63.80px;top:260.97px;transform:scaleX(0.8071);transform-origin:0 50%;font-size:9.6px;font-weight:400;color:#0a0a0a;-webkit-text-stroke:0.3px #0a0a0a;">OK</div>
<div class="t" id="gl1" style="left:44.60px;top:287.77px;transform:scaleX(0.8929);transform-origin:0 50%;font-size:9.6px;font-weight:400;color:#111;-webkit-text-stroke:0.3px #111;">Kamera 2</div>
<div class="t" id="gok1" style="left:63.80px;top:308.27px;transform:scaleX(0.8071);transform-origin:0 50%;font-size:9.6px;font-weight:400;color:#0a0a0a;-webkit-text-stroke:0.3px #0a0a0a;">OK</div>
<div class="t" id="gl2" style="left:44.60px;top:335.17px;transform:scaleX(0.8810);transform-origin:0 50%;font-size:9.6px;font-weight:400;color:#111;-webkit-text-stroke:0.3px #111;">Camera 1</div>
<div class="t" id="gok2" style="left:63.80px;top:355.67px;transform:scaleX(0.8071);transform-origin:0 50%;font-size:9.6px;font-weight:400;color:#0a0a0a;-webkit-text-stroke:0.3px #0a0a0a;">OK</div>
<div class="t" id="do20" style="left:107.70px;top:347.47px;transform:scaleX(0.9200);transform-origin:0 50%;font-size:9.6px;font-weight:400;color:#101010;-webkit-text-stroke:0.3px #101010;">DO_00</div>
<div class="t" id="do21" style="left:150.00px;top:347.47px;transform:scaleX(0.9200);transform-origin:0 50%;font-size:9.6px;font-weight:400;color:#101010;-webkit-text-stroke:0.3px #101010;">DO_01</div>
<div class="t" id="do22" style="left:107.70px;top:363.27px;transform:scaleX(0.9200);transform-origin:0 50%;font-size:9.6px;font-weight:400;color:#101010;-webkit-text-stroke:0.3px #101010;">DO_02</div>
<div class="t" id="do23" style="left:150.00px;top:363.27px;transform:scaleX(0.9200);transform-origin:0 50%;font-size:9.6px;font-weight:400;color:#101010;-webkit-text-stroke:0.3px #101010;">DO_03</div>
<div class="t" id="gl3" style="left:44.60px;top:382.47px;transform:scaleX(0.8905);transform-origin:0 50%;font-size:9.6px;font-weight:400;color:#111;-webkit-text-stroke:0.3px #111;">Camera 2</div>
<div class="t" id="gok3" style="left:63.80px;top:402.97px;transform:scaleX(0.8071);transform-origin:0 50%;font-size:9.6px;font-weight:400;color:#0a0a0a;-webkit-text-stroke:0.3px #0a0a0a;">OK</div>
<div class="t" id="do30" style="left:107.70px;top:394.77px;transform:scaleX(0.8903);transform-origin:0 50%;font-size:9.6px;font-weight:400;color:#101010;-webkit-text-stroke:0.3px #101010;">DO_04</div>
<div class="t" id="do31" style="left:150.00px;top:394.77px;transform:scaleX(0.9200);transform-origin:0 50%;font-size:9.6px;font-weight:400;color:#101010;-webkit-text-stroke:0.3px #101010;">DO_05</div>
<div class="t" id="do32" style="left:107.70px;top:410.57px;transform:scaleX(0.9200);transform-origin:0 50%;font-size:9.6px;font-weight:400;color:#101010;-webkit-text-stroke:0.3px #101010;">DO_06</div>
<div class="t" id="do33" style="left:150.00px;top:410.57px;transform:scaleX(0.9200);transform-origin:0 50%;font-size:9.6px;font-weight:400;color:#101010;-webkit-text-stroke:0.3px #101010;">DO_07</div>
<div class="t" id="t1" style="left:210.60px;top:95.27px;transform:scaleX(0.8837);transform-origin:0 50%;font-size:9.6px;font-weight:400;color:#111;-webkit-text-stroke:0.3px #111;">X3013112</div>
<div class="t" id="t2" style="left:256.80px;top:95.27px;transform:scaleX(0.8738);transform-origin:0 50%;font-size:9.6px;font-weight:400;color:#111;-webkit-text-stroke:0.3px #111;">Kamera 2</div>
<div class="t" id="t3" style="left:302.90px;top:95.27px;transform:scaleX(0.8714);transform-origin:0 50%;font-size:9.6px;font-weight:400;color:#111;-webkit-text-stroke:0.3px #111;">Camera 1</div>
<div class="t" id="t4" style="left:349.00px;top:95.27px;transform:scaleX(0.8905);transform-origin:0 50%;font-size:9.6px;font-weight:400;color:#111;-webkit-text-stroke:0.3px #111;">Camera 2</div>
<div class="t" id="t5" style="left:393.70px;top:94.47px;transform:scaleX(0.8956);transform-origin:0 50%;font-size:9.6px;font-weight:700;color:#111;-webkit-text-stroke:0.2px #111;">Übersicht</div>
<div class="t" id="h0" style="left:249.60px;top:124.25px;width:300px;text-align:center;transform:scaleX(1.0889);transform-origin:50% 50%;font-size:10.1px;font-weight:700;color:#111;-webkit-text-stroke:0.2px #111;">X3013112</div>
<div class="t" id="h1" style="left:629.60px;top:124.25px;width:300px;text-align:center;transform:scaleX(1.0067);transform-origin:50% 50%;font-size:10.1px;font-weight:700;color:#111;-webkit-text-stroke:0.2px #111;">Kamera 2</div>
<div class="t" id="h2" style="left:249.60px;top:442.25px;width:300px;text-align:center;transform:scaleX(1.0000);transform-origin:50% 50%;font-size:10.1px;font-weight:700;color:#111;-webkit-text-stroke:0.2px #111;">Camera 1</div>
<div class="t" id="h3" style="left:629.60px;top:442.25px;width:300px;text-align:center;transform:scaleX(1.0222);transform-origin:50% 50%;font-size:10.1px;font-weight:700;color:#111;-webkit-text-stroke:0.2px #111;">Camera 2</div>
<div class="t" id="bereit" style="left:33.60px;top:755.85px;transform:scaleX(0.8333);transform-origin:0 50%;font-size:10.1px;font-weight:400;color:#111;-webkit-text-stroke:0.3px #111;">Bereit</div>
<div class="t" id="uf" style="left:931.00px;top:756.27px;transform:scaleX(0.8154);transform-origin:0 50%;font-size:9.6px;font-weight:400;color:#8a8a8a;-webkit-text-stroke:0.3px #8a8a8a;">UF</div>
<div class="t" id="num" style="left:949.00px;top:756.10px;transform:scaleX(0.9857);transform-origin:0 50%;font-size:9.8px;font-weight:400;color:#202020;-webkit-text-stroke:0.05px #202020;">NUM</div>
<div class="t" id="rf" style="left:977.00px;top:756.27px;transform:scaleX(0.7692);transform-origin:0 50%;font-size:9.6px;font-weight:400;color:#8a8a8a;-webkit-text-stroke:0.3px #8a8a8a;">RF</div>
</body></html>
